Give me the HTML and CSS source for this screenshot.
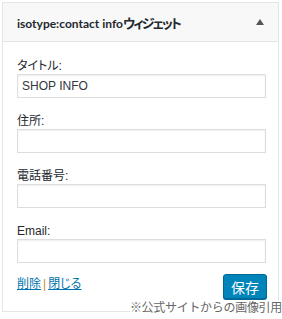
FILE: index.html
```html
<!DOCTYPE html>
<html lang="ja">
<head>
  <meta charset="UTF-8">
  <title>isotype:contact info ウィジェット</title>
  <link rel="stylesheet" href="styles.css">
</head>
<body>
  <div class="widget">
    <div class="widget-top">
      <span class="widget-title">isotype:contact info<span class="jp">ウィジェット</span></span>
      <span class="toggle"></span>
    </div>
    <form class="widget-inside">
      <label class="field">
        <span class="label">タイトル:</span>
        <input type="text" value="SHOP INFO">
      </label>
      <label class="field">
        <span class="label">住所:</span>
        <input type="text">
      </label>
      <label class="field">
        <span class="label">電話番号:</span>
        <input type="text">
      </label>
      <label class="field">
        <span class="label">Email:</span>
        <input type="text">
      </label>
      <div class="controls">
        <div class="links"><a href="#">削除</a><span class="sep">|</span><a href="#">閉じる</a></div>
        <button type="button" class="save">保存</button>
      </div>
    </form>
  </div>
  <div class="credit">※公式サイトからの画像引用</div>
</body>
</html>
```

FILE: styles.css
```css
body { margin: 2px; background: #fff; font-family: "Liberation Sans", "Noto Sans CJK JP", sans-serif; font-size: 12px; color: #23282d; font-feature-settings: "palt"; }
.widget { width: 275px; height: 308px; border: 1px solid #e5e5e5; background: #fff; }
.widget-top { height: 38px; display: flex; align-items: center; justify-content: space-between; padding: 0 14px; background: #f8f8f8; border-bottom: 1px solid #e5e5e5; }
.widget-title { font-family: Lato, "Noto Sans CJK JP", sans-serif; font-weight: bold; font-size: 12px; }
.widget-title .jp { font-size: 13px; letter-spacing: -2px; }
.toggle { width: 0; height: 0; border-left: 4px solid transparent; border-right: 4px solid transparent; border-bottom: 6px solid #555; }
.widget-inside { padding: 16px 11px 0 14px; }
.field { display: block; margin-bottom: 15px; }
.field .label { display: block; height: 16px; line-height: 16px; }
.field input { display: block; box-sizing: border-box; width: 249px; height: 24px; margin: 0; padding: 0 4px; border: 1px solid #ddd; box-shadow: inset 0 1px 2px rgba(0,0,0,0.07); font-family: inherit; font-size: 12px; color: #32373c; }
.controls { display: flex; justify-content: space-between; align-items: flex-start; margin-top: -4px; }
.links { padding-top: 2px; line-height: 16px; }
.links a { color: #0073aa; text-decoration: underline; }
.sep { color: #d0882f; margin: 0 2px; }
.save { width: 44px; height: 25px; padding: 0; border: 1px solid #006799; border-radius: 3px; background: #0085ba; color: #fff; font-family: inherit; font-size: 14px; box-shadow: 0 1px 0 #006799; }
.credit { position: absolute; right: 0; top: 301px; background: #fff; color: #666; font-size: 12px; line-height: 14px; letter-spacing: -0.3px; font-feature-settings: normal; }
```
